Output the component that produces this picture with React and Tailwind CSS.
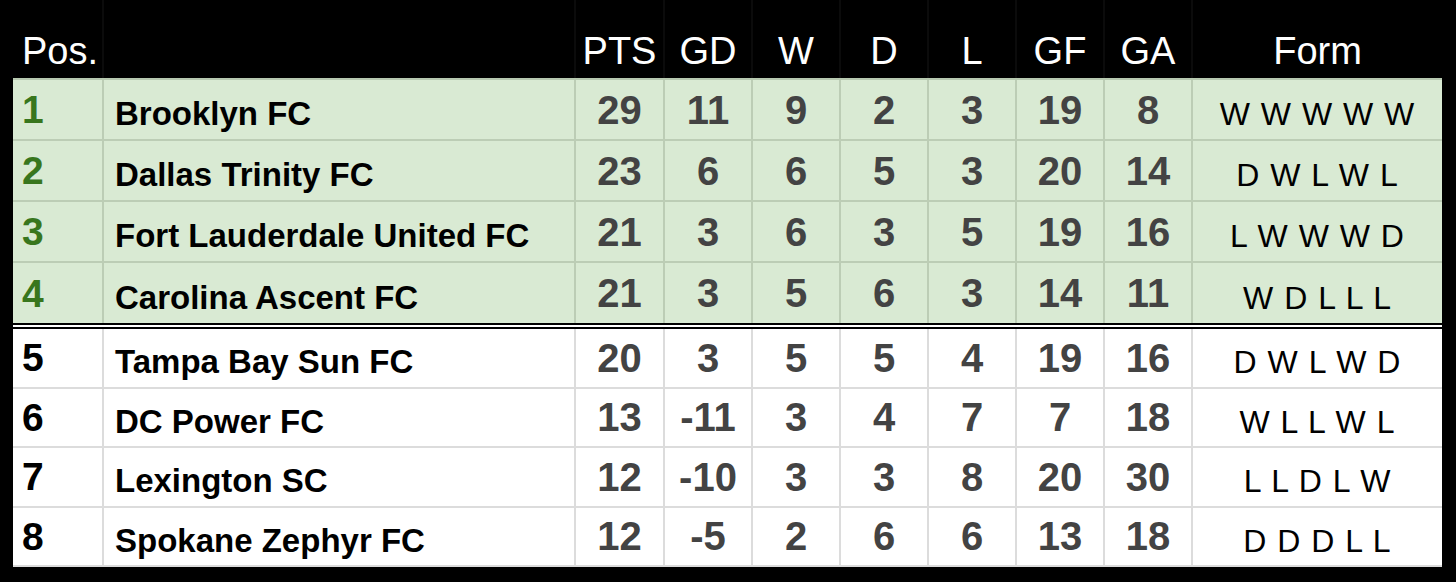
const cols = [91, 472, 89, 88, 88, 88, 88, 88, 88, 249];
const heads = ["Pos.", "", "PTS", "GD", "W", "D", "L", "GF", "GA", "Form"];

const rows = [
  [1, "Brooklyn FC", 29, 11, 9, 2, 3, 19, 8, "W W W W W"],
  [2, "Dallas Trinity FC", 23, 6, 6, 5, 3, 20, 14, "D W L W L"],
  [3, "Fort Lauderdale United FC", 21, 3, 6, 3, 5, 19, 16, "L W W W D"],
  [4, "Carolina Ascent FC", 21, 3, 5, 6, 3, 14, 11, "W D L L L"],
  [5, "Tampa Bay Sun FC", 20, 3, 5, 5, 4, 19, 16, "D W L W D"],
  [6, "DC Power FC", 13, -11, 3, 4, 7, 7, 18, "W L L W L"],
  [7, "Lexington SC", 12, -10, 3, 3, 8, 20, 30, "L L D L W"],
  [8, "Spokane Zephyr FC", 12, -5, 2, 6, 6, 13, 18, "D D D L L"],
];

function HeaderRow() {
  return (
    <div className="flex h-[78px]">
      {heads.map((h, i) => (
        <div
          key={i}
          style={{ width: cols[i] }}
          className={`flex items-end pb-[8px] text-[38px] leading-none text-white ${
            i === 0 ? "pl-[9px]" : "justify-center"
          } ${i < cols.length - 1 ? "border-r-2 border-[#0b0b0b]" : ""}`}
        >
          {h}
        </div>
      ))}
    </div>
  );
}

function Row({ r, top, last }) {
  const line = top ? "border-[#bccdb5]" : "border-[#dcdcdc]";
  const height = top ? (last ? "h-[60px]" : "h-[61px]") : "h-[59.5px]";
  return (
    <div
      className={`flex ${height} ${top ? "bg-[#d9ead3]" : "bg-white"} ${
        last ? "" : `border-b-2 ${line}`
      }`}
    >
      {r.map((v, i) => {
        let cls = "flex items-center leading-none ";
        if (i === 0) {
          cls += `pl-[9px] text-[39px] font-bold ${top ? "text-[#38761d]" : "text-black"}`;
        } else if (i === 1) {
          cls += "pl-[11px] pt-[8px] text-[33px] font-bold text-black";
        } else if (i === 9) {
          cls += "justify-center pt-[9px] text-[32px] tracking-[1px] text-black";
        } else {
          cls += "justify-center text-[40px] font-bold text-[#434343]";
        }
        if (i < cols.length - 1) cls += ` border-r-2 ${line}`;
        return (
          <div key={i} style={{ width: cols[i] }} className={cls}>
            {v}
          </div>
        );
      })}
    </div>
  );
}

export default function App() {
  return (
    <div
      className="h-[582px] w-[1456px] overflow-hidden bg-black"
      style={{ fontFamily: '"Liberation Sans", Arial, sans-serif' }}
    >
      <div className="ml-[13px] w-[1429px]">
        <HeaderRow />
        <div className="h-[2px] bg-[#b7c9b0]" />
        {rows.slice(0, 4).map((r, i) => (
          <Row key={r[0]} r={r} top last={i === 3} />
        ))}
        <div className="h-[2px] bg-black" />
        <div className="h-[2px] bg-white" />
        <div className="h-[2px] bg-black" />
        {rows.slice(4).map((r) => (
          <Row key={r[0]} r={r} />
        ))}
      </div>
    </div>
  );
}
